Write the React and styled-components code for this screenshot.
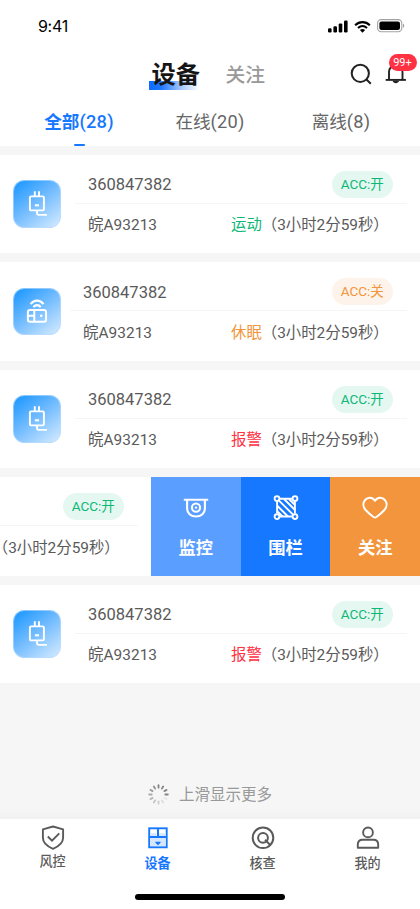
import React from "react";
import styled, { createGlobalStyle } from "styled-components";

const GlobalStyle = createGlobalStyle`
* {
  box-sizing: border-box;
}

body {
  margin: 0;
  background: #f6f6f6;
  font-family: Roboto, "Noto Sans CJK SC", sans-serif;
  color: #5a5a5a;
}

svg {
  display: block;
  flex: none;
}
`;

const Screen = styled.div`
width: 420px;
height: 909px;
display: flex;
flex-direction: column;
overflow: hidden;
background: #f6f6f6;
white-space: nowrap;
`;

const Header = styled.header`
height: 145.5px;
flex: none;
background: #fff;
`;

const StatusBar = styled.div`
height: 52px;
padding: 0 14px 0 38px;
display: flex;
align-items: center;
justify-content: space-between;
color: #000;
`;

const Clock = styled.span`
font: 400 16px/20px Inter, sans-serif;
letter-spacing: -.3px;
`;

const StatusIcons = styled.div`
display: flex;
align-items: center;
gap: 6px;
`;

const TitleBar = styled.div`
height: 44px;
padding: 0 13.5px 0 149px;
display: flex;
align-items: center;
`;

const Title = styled.h1`
margin: 0;
width: 52px;
padding: 2px 0 0 2.5px;
font-size: 24.3px;
font-weight: 700;
line-height: 32px;
color: #151515;
background: linear-gradient(90deg, #0b6cff 0%, #2278ff 25%, #9cc3ff 62%, #fff 100%) 0 24px / 50px 9px no-repeat;
`;

const SubTitle = styled.span`
margin-left: 24.5px;
padding-bottom: 1px;
font-size: 19.8px;
font-weight: 500;
color: #999;
`;

const HeaderIcons = styled.div`
margin-left: auto;
display: flex;
align-items: center;
gap: 12.5px;
`;

const BellWrap = styled.div`
position: relative;
`;

const Badge = styled.span`
position: absolute;
top: -9px;
left: 4px;
width: 28px;
height: 17px;
border-radius: 9px;
background: #ff3143;
color: #fff;
font-size: 11px;
font-weight: 400;
line-height: 17px;
text-align: center;
`;

const Tabs = styled.nav`
height: 50px;
padding: 0 13.5px;
display: grid;
grid-template-columns: repeat(3, 1fr);
`;

const Tab = styled.div`
display: flex;
flex-direction: column;
align-items: center;
padding-top: 11.5px;
font-size: 17.6px;
line-height: 28px;
font-weight: ${props => props.$active ? 700 : 400};
color: ${props => props.$active ? '#1677ff' : '#666'};

&::after {
  content: "";
  width: 11px;
  height: 2.5px;
  margin-top: 8px;
  border-radius: 1px;
  background: ${props => props.$active ? '#1677ff' : 'transparent'};
}
`;

const TabCount = styled.span`
font-size: 18.2px;
font-weight: ${props => props.$active ? 500 : 400};
letter-spacing: .25px;
`;

const List = styled.main`
flex: none;
padding-top: 9px;
display: flex;
flex-direction: column;
gap: 9px;
`;

const SwipeRow = styled.div`
height: 98.5px;
display: flex;
overflow: hidden;
background: #fff;
`;

const Card = styled.div`
flex: none;
width: 420px;
margin-left: ${props => props.$swiped ? '-269px' : 0};
padding: 0 13px;
display: flex;
align-items: center;
gap: ${props => props.$wide ? '9px' : '14px'};
`;

const DeviceIcon = styled.div`
flex: none;
width: 48px;
height: 47.5px;
border-radius: 11.5px;
border: 1px solid rgba(185, 220, 255, .65);
background: linear-gradient(142deg, #1c98ff 5%, #6fbaff 46%, #d9edff 100%) border-box;
display: flex;
align-items: center;
justify-content: center;
`;

const Info = styled.div`
flex: 1;
height: 98.5px;
`;

const InfoRow = styled.div`
height: ${props => props.$top ? '49px' : '42px'};
padding: ${props => props.$top ? '11px 14px 0 13px' : '1px 8px 0 13px'};
border-bottom: ${props => props.$top ? '1px solid #f5f5f5' : 'none'};
display: flex;
align-items: center;
justify-content: space-between;
font-size: 15.4px;
line-height: 24px;
`;

const DeviceNumber = styled.span`
padding-top: 2px;
font-size: 16.5px;
`;

const Plate = styled.span`
letter-spacing: .05px;
`;

const AccPill = styled.span`
width: 61.5px;
height: 27px;
border-radius: 14px;
text-align: center;
font-size: 13.5px;
line-height: 26px;
color: ${props => props.$on ? '#0db877' : '#f2953c'};
background: ${props => props.$on ? '#e4f7f0' : '#fdf3ea'};
`;

const Duration = styled.span`
display: flex;
width: 168px;
`;

const State = styled.span`
color: ${props => props.color};
`;

const Action = styled.button`
flex: 1;
border: 0;
padding: 17px 0 0;
display: flex;
flex-direction: column;
align-items: center;
gap: 14px;
background: ${props => props.$bg};
color: #fff;
font: 700 17.3px/26px Roboto, "Noto Sans CJK SC", sans-serif;
`;

const Loading = styled.div`
flex: 1;
padding-top: 97.5px;
display: flex;
align-items: flex-start;
justify-content: center;
gap: 10px;
font-size: 15.5px;
line-height: 28px;
color: #999;
background: linear-gradient(#f6f6f6 92%, #f1f1f1);

svg {
  margin-top: 3px;
}
`;

const BottomBar = styled.footer`
flex: none;
height: 90px;
background: #fff;
`;

const NavItems = styled.nav`
height: 75px;
display: grid;
grid-template-columns: repeat(4, 1fr);
`;

const NavItem = styled.div`
padding: ${props => props.$raised ? '5.5px' : '6.5px'} 0 0;
display: flex;
flex-direction: column;
align-items: center;
gap: ${props => props.$raised ? '1px' : '3px'};
font-size: 13.1px;
line-height: 22px;
font-weight: ${props => props.$active ? 700 : 500};
color: ${props => props.$active ? '#1677ff' : '#5a5a5a'};
`;

const HomeIndicator = styled.div`
width: 150px;
height: 5.5px;
margin: 0 auto;
border-radius: 3px;
background: #000;
`;

const Signal = () => (
  <svg width="20" height="13" viewBox="0 0 20 13">
    <rect x="0" y="8.2" width="3.6" height="4.3" rx="1.2"/>
    <rect x="5.4" y="6.2" width="3.6" height="6.3" rx="1.2"/>
    <rect x="10.7" y="3.4" width="3.6" height="9.1" rx="1.2"/>
    <rect x="16" y=".5" width="3.6" height="12" rx="1.2"/>
  </svg>
);

const Wifi = () => (
  <svg width="17" height="13" viewBox="0 0 18 13" fill="none" stroke="#000">
    <path d="M1.2 5.1C5.7.8 12.3.8 16.8 5.1" strokeWidth="2.3"/>
    <path d="M4.2 8.1c2.9-2.6 6.7-2.6 9.6 0" strokeWidth="2.2"/>
    <path d="M6.2 10.3c1.8-1.5 3.8-1.5 5.6 0L9 13z" fill="#000" stroke="none"/>
  </svg>
);

const Battery = () => (
  <svg width="29" height="14" viewBox="0 0 29 14">
    <rect x=".6" y=".6" width="24.2" height="12.2" rx="3.7" fill="none" stroke="#a2a2a2" strokeWidth="1.1"/>
    <rect x="2.4" y="2.4" width="20.6" height="8.6" rx="2.1"/>
    <path d="M26 4.5c1.8.7 1.8 3.7 0 4.4z" fill="#a2a2a2"/>
  </svg>
);

const SearchIcon = () => (
  <svg width="22" height="22" viewBox="0 0 22 22" fill="none" stroke="#222" strokeWidth="2">
    <circle cx="10.3" cy="10.3" r="8.6"/>
    <path d="M16.2 16.2l4.6 4.5"/>
  </svg>
);

const BellIcon = () => (
  <svg width="22" height="22" viewBox="0 0 22 22" fill="none" stroke="#222" strokeWidth="1.9">
    <path d="M4 16.2V9c0-4 2.8-6.5 6.7-6.5S17.5 5 17.5 9v7.2"/>
    <path d="M.7 16.9h20.2"/>
    <path d="M7.5 17.8c.8 3.2 5.8 3.2 6.6 0z" fill="#222" stroke="none"/>
  </svg>
);

const PlugIcon = () => (
  <svg width="20" height="27" viewBox="-1 0 20 27" fill="none" stroke="#fff" strokeWidth="1.9" strokeLinejoin="round">
    <rect x="1.9" y="6.4" width="14" height="14" rx="1.2"/>
    <path d="M6.8 1.2v5M11 1.2v5"/>
    <path d="M6.9 15.3h4.1" strokeWidth="2.1"/>
    <path d="M9 20.4v2.7q0 1.8 1.8 1.8H19"/>
  </svg>
);

const RouterIcon = () => (
  <svg width="22" height="25" viewBox="0 0 22 25" fill="none" stroke="#fff" strokeWidth="2">
    <path d="M4.6 5.2c3.5-4.7 9.4-4.7 12.9 0M7.4 8.2c2-2.7 5.3-2.7 7.3 0" strokeWidth="2.2"/>
    <rect x="1.9" y="11" width="18.2" height="11.8" rx="2.3"/>
    <path d="M8.3 11v12M2 16.8h6.3"/>
    <circle cx="15.2" cy="16.8" r="1.3" fill="#fff" stroke="none"/>
  </svg>
);

const CameraIcon = () => (
  <svg width="26" height="27" viewBox="0 0 26 27" fill="none" stroke="#fff" strokeWidth="2.1">
    <path d="M.8 5.7h24.4M4.1 6v8.5c0 4.5 3.6 8 8.9 8s8.9-3.5 8.9-8V6"/>
    <circle cx="13" cy="13.6" r="4.1"/>
    <circle cx="13" cy="13.6" r="1.2" fill="#fff" stroke="none"/>
  </svg>
);

const FenceIcon = () => (
  <svg width="26" height="27" viewBox="0 0 26 27" fill="none" stroke="#fff" strokeWidth="1.9">
    <path d="M7 4.7h12M7 22.5h12M4.1 7.5v12M21.9 7.5v12"/>
    <path d="M6 6.6l14 14M11 5l11 11M16 5l6 6M4 11.5l11 11M4 17l5.5 5.5"/>
    <g strokeWidth="1.9">
      <circle cx="4" cy="4.6" r="2.4" fill="#1677ff"/>
      <circle cx="22" cy="4.6" r="2.4" fill="#1677ff"/>
      <circle cx="4" cy="22.6" r="2.4" fill="#1677ff"/>
      <circle cx="22" cy="22.6" r="2.4" fill="#1677ff"/>
    </g>
  </svg>
);

const HeartIcon = () => (
  <svg width="26" height="27" viewBox="0 0 26 27" fill="none" stroke="#fff" strokeWidth="2" strokeLinejoin="round">
    <path d="M13 6.8C10.5 2.9 5.7 3 3.1 6 .6 9 1 13.1 3.6 16c2.5 2.8 5.4 5.2 8 7q1.4.9 2.8 0c2.6-1.8 5.5-4.2 8-7 2.6-2.9 3-7 .5-10-2.6-3-7.4-3.1-9.9.8z"/>
  </svg>
);

const Spinner = () => (
  <svg width="21" height="21" viewBox="-10.5 -10.5 21 21">
    {[...Array(12)].map((_, i) => (
      <rect
        key={i}
        x="-.9" y="-10.2" width="1.8" height="4.3" rx=".9"
        fill="#858585"
        opacity={i < 4 ? 1 : .12 + (i - 4) * .11}
        transform={`rotate(${i * 30})`}
        />
    ))}
  </svg>
);

const ShieldIcon = () => (
  <svg width="24" height="25" viewBox="0 0 24 25" fill="none" stroke="currentColor" strokeWidth="1.9">
    <path d="M12 1.5l10.1 2.8v8.5c0 5-4.5 8.7-10.1 11-5.6-2.3-10.1-6-10.1-11V4.3z" strokeLinejoin="round"/>
    <path d="M6.8 11.5l4.2 4.2 7.3-7.4"/>
  </svg>
);

const CabinetIcon = () => (
  <svg width="24" height="24" viewBox="0 0 24 24" fill="none" stroke="currentColor" strokeWidth="1.9">
    <rect x="3.2" y="2.3" width="17.5" height="19" fill="#fff"/>
    <path d="M4.5 7.2h6v3h-6zM13 7.2h6.5v3H13zM4.5 12h15v8h-15z" fill="#d5e6ff" stroke="none"/>
    <path d="M3.2 11h17.5M12 2.3V11" strokeWidth="2"/>
    <path d="M9.4 15.7h5.2v1L12 19.3l-2.6-2.6z" fill="currentColor" stroke="none"/>
  </svg>
);

const CheckIcon = () => (
  <svg width="24" height="24" viewBox="0 0 24 24" fill="none" stroke="currentColor" strokeWidth="2">
    <circle cx="12" cy="11.8" r="10.3"/>
    <circle cx="12" cy="11.8" r="4.9"/>
    <path d="M14 13.8l5 5"/>
  </svg>
);

const UserIcon = () => (
  <svg width="24" height="24" viewBox="0 0 24 24" fill="none" stroke="currentColor" strokeWidth="1.9">
    <circle cx="12" cy="6.4" r="4.9"/>
    <path d="M1.8 21.7v-3.2q0-4.8 4.8-4.8h10.8q4.8 0 4.8 4.8v3.2z" strokeLinejoin="round"/>
  </svg>
);

const devices = [
  { id: 1, on: true, state: "运动", color: "#0db877" },
  { id: 2, on: false, state: "休眠", color: "#f2953c", router: true },
  { id: 3, on: true, state: "报警", color: "#ff3143" },
  { id: 4, on: true, state: "报警", color: "#ff3143", swiped: true },
  { id: 5, on: true, state: "报警", color: "#ff3143" },
];

const Device = ({ device }) => (
  <SwipeRow>
    <Card $swiped={device.swiped} $wide={device.router}>
      <DeviceIcon>{device.router ? <RouterIcon /> : <PlugIcon />}</DeviceIcon>
      <Info>
        <InfoRow $top>
          <DeviceNumber>360847382</DeviceNumber>
          <AccPill $on={device.on}>ACC:{device.on ? "开" : "关"}</AccPill>
        </InfoRow>
        <InfoRow>
          <Plate>皖A93213</Plate>
          <Duration>
            <State color={device.color}>{device.state}</State>
            <span>（3小时2分59秒）</span>
          </Duration>
        </InfoRow>
      </Info>
    </Card>
    {device.swiped && (
      <>
        <Action $bg="#5a9eff"><CameraIcon />监控</Action>
        <Action $bg="#1677ff"><FenceIcon />围栏</Action>
        <Action $bg="#f2953c"><HeartIcon />关注</Action>
      </>
    )}
  </SwipeRow>
);

const App = () => (
  <>
    <GlobalStyle />
    <Screen>
      <Header>
        <StatusBar>
          <Clock>9:41</Clock>
          <StatusIcons><Signal /><Wifi /><Battery /></StatusIcons>
        </StatusBar>
        <TitleBar>
          <Title>设备</Title>
          <SubTitle>关注</SubTitle>
          <HeaderIcons>
            <SearchIcon />
            <BellWrap>
              <BellIcon />
              <Badge>99+</Badge>
            </BellWrap>
          </HeaderIcons>
        </TitleBar>
        <Tabs>
          <Tab $active><span>全部<TabCount $active>(28)</TabCount></span></Tab>
          <Tab><span>在线<TabCount>(20)</TabCount></span></Tab>
          <Tab><span>离线<TabCount>(8)</TabCount></span></Tab>
        </Tabs>
      </Header>
      <List>
        {devices.map(device => <Device key={device.id} device={device} />)}
      </List>
      <Loading><Spinner />上滑显示更多</Loading>
      <BottomBar>
        <NavItems>
          <NavItem $raised><ShieldIcon />风控</NavItem>
          <NavItem $active><CabinetIcon />设备</NavItem>
          <NavItem><CheckIcon />核查</NavItem>
          <NavItem><UserIcon />我的</NavItem>
        </NavItems>
        <HomeIndicator />
      </BottomBar>
    </Screen>
  </>
);

export default App;
